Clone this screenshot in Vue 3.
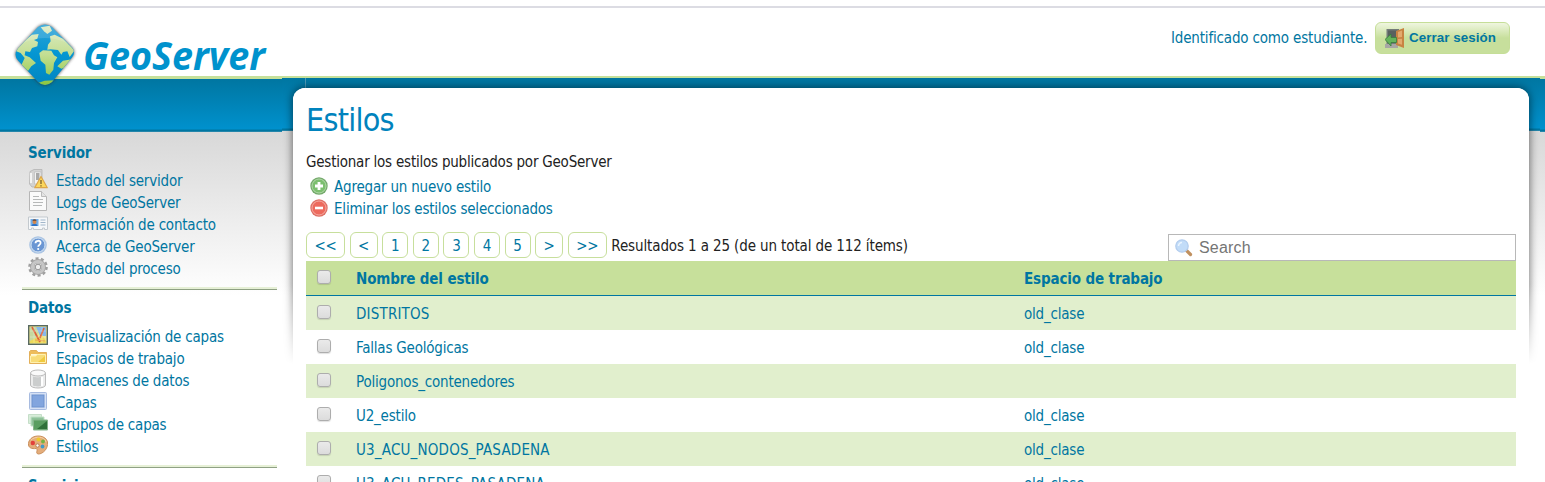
<script setup>
const icons = {
  status:
    '<path d="M2 2.5 6 .5h8v15l-4 2.500H4L1.500 15z" fill="#d3d3d3" stroke="#b4b4b4" stroke-width=".8"/><path d="M6.500 3h6.500v12H6.500z" fill="#f3f3f3" stroke="#bbb" stroke-width=".7"/><path d="M8 4h3.500v7H8z" fill="#a9a9a9"/><path d="M3 4v10" stroke="#fff" stroke-width="1.500"/><path d="M13 7.500 19.300 18.700H6.700z" fill="#fbd75d" stroke="#dda64a" stroke-width="1.200" stroke-linejoin="round"/><path d="M13 11v4M13 16.200v1.300" stroke="#7b6130" stroke-width="1.300"/>',
  logs:
    '<path d="M1.500.5h12l5 5v14h-17z" fill="#fafafa" stroke="#b6b6b6"/><path d="M13.500.5v5h5" fill="#e4e4e4" stroke="#bbb"/><path d="M5 5.500h6M5 8.500h10M5 11.500h10M5 14.500h9" stroke="#b6b8b8"/>',
  contact:
    '<path d="M.5 4h19v12.500h-3V15h-2v1.500h-9V15h-2v1.500h-3z" fill="#f6f8fa" stroke="#c3c9ce"/><rect x="2.500" y="6" width="8" height="7" fill="#73aee7"/><path d="M3.500 13c0-3 6-3 6 0z" fill="#2e72c5"/><circle cx="6.500" cy="9" r="2" fill="#d68749"/><path d="M4.500 8c0-2.500 4-2.500 4 0z" fill="#765341"/><path d="M12.500 7h5M12.500 9.500h5M12.500 12h5" stroke="#a1b6ca"/>',
  help:
    '<circle cx="10" cy="10" r="8.800" fill="#aac4e3"/><circle cx="10" cy="10" r="7" fill="#6a96d3" stroke="#d2e2f3"/><path d="M7.500 8.200C7.500 5 12.800 5 12.600 8c-.1 1.800-2.400 2-2.400 3.700" fill="none" stroke="#fff" stroke-width="1.800"/><circle cx="10.200" cy="14" r="1.100" fill="#fff"/>',
  gear:
    '<circle cx="10" cy="10" r="8.300" fill="none" stroke="#a0a0a0" stroke-width="3" stroke-dasharray="2.900 2.315"/><circle cx="10" cy="10" r="5.700" fill="none" stroke="#a6a6a6" stroke-width="4.500"/><circle cx="10" cy="10" r="5.600" fill="none" stroke="#c6c6c6" stroke-width="3"/><circle cx="10" cy="10" r="2.800" fill="#eee" stroke="#909090"/>',
  preview:
    '<rect x=".7" y=".7" width="18.600" height="18.600" fill="#e9e490" stroke="#586962" stroke-width="1.400"/><path d="M2 2h6l2 6-3 10H2z" fill="#c6d8a0"/><path d="M8 2h10v9h-6z" fill="#86b9ec"/><path d="M2 16 14 10l4 6v2H2z" fill="#edda5b"/><path d="m4 2 8 15M16 3l-4 10" stroke="#dd6138" stroke-width="1.700" fill="none"/><path d="m7 15 10 1" stroke="#e9a25a"/><path d="M2 6h16M2 12h16M6 2v16M14 2v16" stroke="#fff" stroke-width=".5" opacity=".5"/>',
  folder:
    '<path d="M1.500 16.500v-12l1-1h6l1.500 2h8.500v11z" fill="#eebd5b" stroke="#e3b05a"/><path d="M3 7h14v2H3z" fill="#fff9d8"/><path d="M2.500 9h5l2-1.500h8v8h-15z" fill="#f8dc78" stroke="#fff1af"/><path d="M10 15h7V9z" fill="#f0ca3e"/>',
  database:
    '<path d="M2.500 4v12c0 4 15 4 15 0V4" fill="#ececec" stroke="#bbb"/><ellipse cx="10" cy="4" rx="7.500" ry="3" fill="#fafafa" stroke="#bbb"/><path d="M5 7.500c2 1 7 1 8 .3V17c-2 .7-6 .5-8-.5z" fill="#cbcdcd"/><path d="M14 8v9" stroke="#fff" stroke-width="2"/>',
  layer:
    '<rect x="1.500" y="1.500" width="17" height="17" rx="1" fill="#d6e1f5" stroke="#a7bbe0"/><rect x="4" y="4" width="12" height="12" fill="#82a5de" stroke="#6e93ce"/>',
  group:
    '<path d="M.5 1.500h13v9H.5z" fill="#d8edda" stroke="#c5dec8"/><path d="M3 4h13v9H3z" fill="#8fc39a" stroke="#c1e0c5"/><path d="M5.500 7h14v10h-14z" fill="#5a9e60" stroke="#86b58b"/><path d="M19 8v8H9z" fill="#2f7138"/>',
  palette:
    '<path d="M3 3.500C7-.5 18 0 19.500 7c1 7-5 12-9 12-4-.3.500-5-2.500-5.500C4 14 0 13 .5 8.500c.1-2 1-3.500 2.500-5z" fill="#e4ad7b" stroke="#c98f5c"/><path d="M3 5C7 1 17 1 18 7" stroke="#f6d1a3" fill="none"/><circle cx="4.800" cy="8" r="2.200" fill="#e2413a"/><circle cx="10.500" cy="4.500" r="2" fill="#efc929"/><circle cx="15" cy="6.500" r="1.900" fill="#75b442"/><circle cx="14.500" cy="11.500" r="1.900" fill="#4299c7"/><circle cx="9.500" cy="10.500" r="1.700" fill="#fff" stroke="#b67b4f"/>',
}
const menus = [
  {
    title: 'Servidor',
    items: [
      ['status', 'Estado del servidor'],
      ['logs', 'Logs de GeoServer'],
      ['contact', 'Información de contacto'],
      ['help', 'Acerca de GeoServer'],
      ['gear', 'Estado del proceso'],
    ],
  },
  {
    title: 'Datos',
    items: [
      ['preview', 'Previsualización de capas'],
      ['folder', 'Espacios de trabajo'],
      ['database', 'Almacenes de datos'],
      ['layer', 'Capas'],
      ['group', 'Grupos de capas'],
      ['palette', 'Estilos'],
    ],
  },
  { title: 'Servicios', items: [] },
]
const pages = ['<<', '<', '1', '2', '3', '4', '5', '>', '>>']
const rows = [
  ['DISTRITOS', 'old_clase'],
  ['Fallas Geológicas', 'old_clase'],
  ['Poligonos_contenedores', ''],
  ['U2_estilo', 'old_clase'],
  ['U3_ACU_NODOS_PASADENA', 'old_clase'],
  ['U3_ACU_REDES_PASADENA', 'old_clase'],
]
</script>

<template>
  <div class="page">
    <header class="header">
      <a class="logo">
        <svg width="270" height="90" viewBox="0 0 270 90">
          <defs>
            <linearGradient id="sea" x1="0" y1="0" x2="0" y2="1">
              <stop offset="0" stop-color="#35a6d8" /><stop offset=".5" stop-color="#0596d2" /><stop offset="1" stop-color="#0082bd" />
            </linearGradient>
            <linearGradient id="land" gradientUnits="userSpaceOnUse" x1="0" y1="22" x2="0" y2="200">
              <stop offset="0" stop-color="#dcebc4" /><stop offset=".5" stop-color="#c3de92" /><stop offset="1" stop-color="#8cc63f" />
            </linearGradient>
            <clipPath id="globe"><path d="M38 21q7-5 14 0l20 20.500q4 5 0 10L52 76q-7 6-14 0L18 54.500q-5-6 0-12z" /></clipPath>
            <filter id="soft" x="-20%" y="-20%" width="140%" height="140%"><feGaussianBlur stdDeviation="1.600" /></filter>
          </defs>
          <path d="M38 21q7-5 14 0l20 20.500q4 5 0 10L52 76q-7 6-14 0L18 54.500q-5-6 0-12z" fill="#333" opacity=".7" stroke="#333" filter="url(#soft)" />
          <g clip-path="url(#globe)">
            <path d="M10 10h70v75H10z" fill="url(#sea)" />
            <g fill="url(#land)" transform="translate(8 12) scale(.3333)">
              <path d="M20 98 45 72 72 50l20-2-4 14-10 4 12 6-2 13-16 5-6 12-14-2-2 12 15 6 19 17-14 10-10 14-20-17 10-22-12-15z" />
              <path d="M98 28 125 23l7 15-14 10-10-8z" />
              <path d="m118 95 2-15 8-10-2-15 14-5 25 12 35 35-15 20-7-17-13 2-5 8-10-14-22-2z" />
              <path d="m94 105 11-8 25 1 8 14 10 6-10 17-2 20-12 15-10-5-2-25-14-12z" />
              <path d="m148 145 17-17 27-4-7 21-25 7zM90 195l20-7 32-1-22 17h-20z" />
            </g>
            <path d="M15 42 45 13l28 28q-8-6-18-8-22-4-40 9z" fill="#fff" opacity=".14" />
          </g>
          <text class="wordmark" x="83" y="63.500" textLength="182" lengthAdjust="spacingAndGlyphs">GeoServer</text>
        </svg>
      </a>
      <div class="session">
        <span class="user">Identificado como estudiante.</span>
        <button class="logout">
          <svg width="20" height="21" viewBox="0 0 20 21">
            <path d="M1.500 1H14v15H1.500z" fill="#737b79" /><path d="M3 2.500h9V15H3z" fill="#59615f" /><path d="M0 16h13v4H0z" fill="#a7a7a4" />
            <path d="m11 3 8-3v20l-8-3z" fill="#c88342" /><path d="m13 4 4-1.500v6.500l-4 .5zM13 11l4-.2v6l-4-1.300z" fill="#e3aa6d" />
            <path d="M0 11.500 6 6v3.500h5.500v5H6V18z" fill="#65b45b" stroke="#387e3c" stroke-width=".8" />
          </svg>
          <span>Cerrar sesión</span>
        </button>
      </div>
    </header>

    <div class="body">
      <div class="underlay"><i class="tick"></i></div>
      <div class="shade"><div class="shade-box"></div></div>
      <nav class="sidebar">
        <section v-for="menu in menus" :key="menu.title" class="menu">
          <h2>{{ menu.title }}</h2>
          <ul>
            <li v-for="[icon, label] in menu.items" :key="label">
              <svg width="20" height="20" viewBox="0 0 20 20" v-html="icons[icon]"></svg>
              <a>{{ label }}</a>
            </li>
          </ul>
        </section>
      </nav>

      <main class="panel">
        <h1>Estilos</h1>
        <p class="intro">Gestionar los estilos publicados por GeoServer</p>
        <ul class="actions">
          <li>
            <svg width="18" height="18" viewBox="0 0 18 18"><circle cx="9" cy="9" r="8.700" fill="#73a96a" /><circle cx="9" cy="9" r="7" fill="#7cbf6f" stroke="#b3d9aa" /><path d="M9 5v8M5 9h8" stroke="#fff" stroke-width="2.800" /></svg>
            <a>Agregar un nuevo estilo</a>
          </li>
          <li>
            <svg width="18" height="18" viewBox="0 0 18 18"><circle cx="9" cy="9" r="8.700" fill="#de6f64" /><circle cx="9" cy="9" r="7" fill="#ed6a5d" stroke="#f6aaa1" /><path d="M5 9h8" stroke="#fff" stroke-width="2.600" /></svg>
            <a>Eliminar los estilos seleccionados</a>
          </li>
        </ul>
        <div class="toolbar">
          <div class="pager">
            <a v-for="p in pages" :key="p" :class="{ arrow: p === '<' || p === '>', ends: p.length === 2 }">{{ p }}</a>
            <span class="results">Resultados 1 a 25 (de un total de 112 ítems)</span>
          </div>
          <div class="search">
            <svg width="18" height="18" viewBox="0 0 18 18"><path d="m11.500 11.500 4 4" stroke="#c0905f" stroke-width="3.200" stroke-linecap="round" /><circle cx="7" cy="7" r="6.200" fill="#c2dcf8" stroke="#b3cdee" stroke-width="1.300" /><path d="M3.500 7A3.500 3.500 0 0 1 7 3.500" stroke="#e9f4ff" stroke-width="1.500" fill="none" /></svg>
            <span>Search</span>
          </div>
        </div>
        <div class="table">
          <div class="row head"><i class="check"></i><b>Nombre del estilo</b><b>Espacio de trabajo</b></div>
          <div v-for="[name, space] in rows" :key="name" class="row">
            <i class="check"></i><a :class="{ caps: name === name.toUpperCase() }">{{ name }}</a><a>{{ space }}</a>
          </div>
        </div>
      </main>
    </div>
  </div>
</template>

<style>
body { margin: 0; overflow: hidden; }
</style>

<style scoped>
* { box-sizing: border-box; }
.page {
  width: 1545px; height: 482px; overflow: hidden; background: #fff; color: #222;
  font: 15px/22px Tahoma, "DejaVu Sans Condensed", "DejaVu Sans", sans-serif;
  font-stretch: condensed; letter-spacing: -.2px;
}
h1, h2, p, ul { margin: 0; padding: 0; font-weight: normal; }
ul { list-style: none; }
a, b, .user { color: #0076a1; white-space: nowrap; }
svg { display: block; flex: none; }
.header {
  position: relative; z-index: 3; height: 76px; display: flex; justify-content: flex-end;
  padding: 21px 35px 0 0;
  background: linear-gradient(#dcdce3, #dcdce3) 0 6px / 100% 2px no-repeat;
}
.logo { position: absolute; left: 0; top: 6px; }
.wordmark { font: italic bold 38.500px "Open Sans", "Noto Sans", sans-serif; letter-spacing: 0; fill: #0092cd; }
.session { display: flex; align-items: center; height: 33px; gap: 8px; }
.user { width: 196px; letter-spacing: -.17px; }
.logout {
  width: 135px; height: 32px; display: flex; align-items: center; gap: 4px; padding: 0 0 0 9px; margin-top: 1px;
  border: 1px solid #c5de98; border-radius: 6px; background: linear-gradient(#eff6df, #c7df9c 50%);
  color: #0076a1; font: bold 13.333px "Liberation Sans", Arial, sans-serif; letter-spacing: .08px; white-space: nowrap;
}
.logout span { margin-top: -1px; }
.body {
  position: relative; display: grid; grid-template-columns: 293px 1236px 1fr; height: 406px;
  background: linear-gradient(#c6e09a 0 3px, #0076a1 3px, #0091cd 53px, #0076a1 54px, #0076a1 55px, #4795b4 56px, #d9d9d9 56px, #dadada 64px, #fff 220px);
}
.underlay {
  position: absolute; left: 282px; top: 0; width: 1258px; height: 56px;
  background: linear-gradient(#c6e09a 0 2px, #0076a1 2px, #0091cd 52px, #0076a1 53px, #0076a1 54px, #4795b4 55px, #d9d9d9 55px);
}
.tick { position: absolute; left: 23px; top: 2px; width: 1px; height: 10px; background: #4c9ab8; }
.shade {
  position: absolute; left: 278px; top: 2px; width: 1266px; height: 286px; overflow: hidden;
  -webkit-mask-image: linear-gradient(#000 72%, transparent 100%); mask-image: linear-gradient(#000 72%, transparent 100%);
}
.shade-box { margin: 10px 15px 0; height: 340px; border-radius: 12px; box-shadow: 0 0 10px rgba(0, 0, 0, .6); background: #fff; }
.sidebar { position: relative; padding: 66px 16px 0 22px; }
.menu { border-bottom: 1px solid #8fa184; box-shadow: inset 0 -2px #e6f0d6; padding: 0 0 10px 6px; margin-bottom: 7px; height: 148px; }
.menu + .menu { height: 171px; }
h2 { font-size: 15px; font-weight: bold; color: #0076a1; line-height: 22px; letter-spacing: -.15px; }
.menu ul { padding-top: 6px; }
.menu + .menu ul { padding-top: 7px; }
.menu li { display: flex; height: 22px; gap: 8px; }
.menu li svg { margin-top: -1px; }
.panel { position: relative; margin-top: 12px; padding: 0 13px; border-radius: 12px 12px 0 0; background: #fff; }
h1 { color: #0083bd; font-size: 32px; line-height: 40px; padding-top: 12px; letter-spacing: -.75px; }
.intro { padding-top: 11px; height: 36px; letter-spacing: -.22px; }
.actions li { display: flex; height: 22px; gap: 6px; padding-left: 4px; }
.actions svg { margin-top: 1px; }
.toolbar { display: flex; justify-content: space-between; height: 41px; padding-top: 12px; }
.pager { display: flex; gap: 4.600px; align-items: flex-start; }
.pager a { width: 26px; height: 26px; border: 1px solid #c7df9c; border-radius: 6px; text-align: center; line-height: 26px; }
.pager .arrow { width: 28px; }
.pager .ends { width: 39px; }
.results { line-height: 28px; white-space: nowrap; letter-spacing: -.12px; }
.search {
  width: 348px; height: 27px; margin-top: 2px; display: flex; align-items: center; gap: 6px; padding: 0 6px;
  border: 1px solid #b8b8b8; background: #fff; color: #757575; font: 16px "Liberation Sans", Arial, sans-serif; letter-spacing: 0.2px;
}
.row { display: grid; grid-template-columns: 50px 668px 1fr; height: 34px; line-height: 36.500px; }
.row:nth-child(even) { background: #e1efcd; }
.row.head { height: 35px; background: #c7e09b; border-bottom: 1px solid #0076a1; letter-spacing: -.14px; }
.caps { letter-spacing: .18px; }
.check {
  width: 14px; height: 14px; margin: 9px 0 0 11px; border: 1px solid #adadad; border-radius: 3px;
  background: linear-gradient(#eaeaea, #dcdcdc); box-shadow: 0 1px 1px rgba(0, 0, 0, .12);
}
</style>
